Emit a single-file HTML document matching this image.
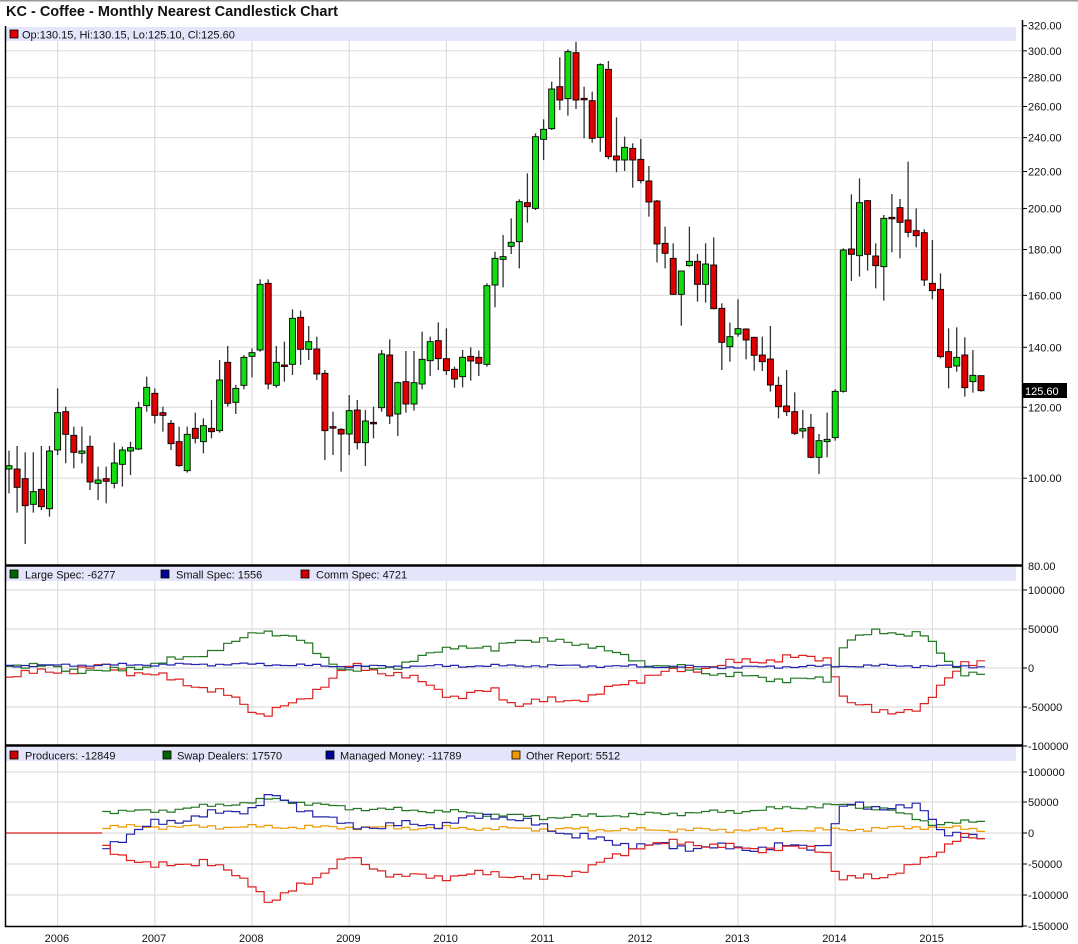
<!DOCTYPE html>
<html><head><meta charset="utf-8"><style>
html,body{margin:0;padding:0;background:#fff;width:1078px;height:944px;overflow:hidden}
svg{display:block}
text{font-family:"Liberation Sans",sans-serif}
</style></head><body>
<svg id="s" width="1078" height="944" xmlns="http://www.w3.org/2000/svg">
<rect x="0" y="0" width="1078" height="944" fill="#fff"/>
<rect x="0" y="0" width="1078" height="1.5" fill="#999"/>
<text x="6" y="16" font-size="14.5" font-weight="bold" fill="#111">KC - Coffee - Monthly Nearest Candlestick Chart</text>
<g id="grid"></g>
<rect x="6" y="27" width="1010" height="14" fill="#e4e4fb"/>
<rect x="6" y="567" width="1010" height="14" fill="#e4e4fb"/>
<rect x="6" y="747" width="1010" height="14" fill="#e4e4fb"/>
<g id="lines"></g>
<g id="candles"></g>
<line x1="5.5" y1="26" x2="5.5" y2="927" stroke="#000" stroke-width="1.5"/>
<line x1="1022.5" y1="20" x2="1022.5" y2="927" stroke="#000" stroke-width="1.5"/>
<line x1="5" y1="926.5" x2="1023" y2="926.5" stroke="#000" stroke-width="1.5"/>
<line x1="5" y1="565.5" x2="1022" y2="565.5" stroke="#000" stroke-width="2.5"/>
<line x1="5" y1="745.5" x2="1022" y2="745.5" stroke="#000" stroke-width="2.5"/>
<g id="axis" font-size="11" fill="#111"></g>
<g font-size="11" fill="#111">
<rect x="10" y="30" width="8" height="8" fill="#e00000" stroke="#000" stroke-width="0.8"/>
<text x="22" y="38.5">Op:130.15, Hi:130.15, Lo:125.10, Cl:125.60</text>
<rect x="10" y="570" width="8" height="8" fill="#006600" stroke="#000" stroke-width="0.8"/>
<text x="25" y="578.5">Large Spec: -6277</text>
<rect x="161" y="570" width="8" height="8" fill="#000099" stroke="#000" stroke-width="0.8"/>
<text x="176" y="578.5">Small Spec: 1556</text>
<rect x="301" y="570" width="8" height="8" fill="#cc0000" stroke="#000" stroke-width="0.8"/>
<text x="316" y="578.5">Comm Spec: 4721</text>
<rect x="10" y="751" width="8" height="8" fill="#cc0000" stroke="#000" stroke-width="0.8"/>
<text x="25" y="759.5">Producers: -12849</text>
<rect x="163" y="751" width="8" height="8" fill="#006600" stroke="#000" stroke-width="0.8"/>
<text x="177" y="759.5">Swap Dealers: 17570</text>
<rect x="326" y="751" width="8" height="8" fill="#000099" stroke="#000" stroke-width="0.8"/>
<text x="340" y="759.5">Managed Money: -11789</text>
<rect x="512" y="751" width="8" height="8" fill="#ee9900" stroke="#000" stroke-width="0.8"/>
<text x="526" y="759.5">Other Report: 5512</text>
<rect x="1023" y="383" width="44" height="15" fill="#000"/>
<text x="1025" y="395" fill="#fff">125.60</text>
</g>
</svg>
<script>
var NS="http://www.w3.org/2000/svg";
function el(p,t,a,txt){var e=document.createElementNS(NS,t);for(var k in a)e.setAttribute(k,a[k]);if(txt!=null)e.textContent=txt;document.getElementById(p).appendChild(e);return e;}
function py(v){return 565-389*Math.log(v/80);}
function X(m){return 9+m*8.1;}
// grid
var prices=[100,120,140,160,180,200,220,240,260,280,300];
prices.forEach(function(p){var y=py(p);el("grid","line",{x1:6,x2:1022,y1:y,y2:y,stroke:"#dedede","stroke-width":1.2});});
for(var yr=0;yr<10;yr++){var x=X(6+12*yr);el("grid","line",{x1:x,x2:x,y1:27,y2:926,stroke:"#dedede","stroke-width":1.2});
 el("axis","text",{x:x-13,y:942},String(2006+yr));}
[590,629,668,707].forEach(function(y){el("grid","line",{x1:6,x2:1022,y1:y,y2:y,stroke:"#dedede","stroke-width":1.2});});
[772,802,833,864,895].forEach(function(y){el("grid","line",{x1:6,x2:1022,y1:y,y2:y,stroke:"#dedede","stroke-width":1.2});});
// axis labels
[320,300,280,260,240,220,200,180,160,140,120,100].forEach(function(p){var y=py(p);el("axis","line",{x1:1022,x2:1027,y1:y,y2:y,stroke:"#000"});el("axis","text",{x:1028,y:y+4},p.toFixed(2));});
el("axis","text",{x:1028,y:570},"80.00");
var l2=[[590,"100000"],[629,"50000"],[668,"0"],[707,"-50000"],[746,"-100000"]];
l2.forEach(function(a){el("axis","line",{x1:1022,x2:1027,y1:a[0],y2:a[0],stroke:"#000"});el("axis","text",{x:1028,y:a[0]+4},a[1]);});
var l3=[[772,"100000"],[802,"50000"],[833,"0"],[864,"-50000"],[895,"-100000"],[926,"-150000"]];
l3.forEach(function(a){el("axis","line",{x1:1022,x2:1027,y1:a[0],y2:a[0],stroke:"#000"});el("axis","text",{x:1028,y:a[0]+4},a[1]);});
// candles: [top,bottom,high,low,color] in zoom coords
var z4=[[617,627,572,700,"g"],[627,682,558,758,"r"],[656,737,577,852,"r"],[695,733,577,758,"g"],[688,740,558,750,"r"],[573,746,558,770,"g"],[458,570,385,585,"g"],[455,523,440,610,"r"],[526,577,500,625,"r"],[573,580,500,610,"g"],[559,666,527,690,"r"],[660,670,620,720,"g"],[656,664,620,730,"r"],[609,670,548,685,"g"],[570,613,560,680,"g"],[563,573,545,645,"g"],[443,567,425,570,"g"],[382,437,350,455,"g"],[400,466,385,490,"r"],[458,466,440,515,"r"],[490,551,480,570,"r"],[545,617,500,620,"r"],[523,632,500,638,"g"],[505,535,458,550,"r"],[497,545,475,580,"g"],[505,515,420,535,"r"],[360,512,300,518,"g"],[307,430,258,440,"r"],[385,427,375,462,"g"],[292,376,285,388,"g"],[278,289,265,352,"g"],[73,270,58,275,"g"],[70,372,58,388,"r"],[307,376,258,383,"g"],[315,318,245,365,"r"],[175,313,148,345,"g"],[172,268,152,315,"r"],[245,268,198,300,"g"],[267,342,230,360,"r"],[340,512,330,600,"r"],[500,502,455,585,"r"],[508,522,505,635,"r"],[452,522,405,585,"g"],[450,548,420,568,"r"],[483,548,450,618,"g"],[487,490,440,535,"r"],[282,443,270,455,"g"],[285,468,238,492,"r"],[368,462,365,528,"g"],[365,432,273,458,"r"],[368,432,273,452,"g"],[298,372,215,388,"g"],[245,302,230,348,"g"],[242,296,187,330,"r"],[296,332,205,345,"r"],[328,357,320,383,"r"],[292,350,270,382,"g"],[289,303,262,362,"r"],[292,310,272,348,"r"]];
var z5=[[767,1003,760,1010,"g"],[685,765,665,832,"g"],[680,688,615,772,"g"],[637,649,565,672,"g"],[515,635,508,715,"g"],[518,530,430,578,"r"],[320,535,310,540,"g"],[298,328,268,390,"g"],[177,296,155,300,"g"],[170,210,82,240,"r"],[65,206,58,257,"g"],[68,210,35,237,"r"],[205,208,170,325,"r"],[212,325,185,338,"r"],[104,322,100,365,"g"],[118,380,93,388,"r"],[378,390,262,427,"r"],[352,390,320,423,"g"],[355,390,340,473,"r"],[388,452,327,460,"r"],[453,516,408,560,"r"],[513,642,510,697,"r"],[640,670,590,715,"r"],[685,793,640,795,"r"],[723,793,722,887,"g"],[694,707,590,710,"g"],[694,763,672,815,"r"],[702,763,640,818,"g"],[705,836,622,838,"r"],[835,937,820,1020,"r"],[920,950,878,995,"g"],[896,912,808,920,"g"],[897,930,895,988,"r"],[922,976,920,1022,"r"],[975,995,920,1023,"r"]];
var z6=[[627,705,528,725,"r"],[706,770,680,805,"r"],[768,785,660,798,"r"],[785,850,727,855,"r"],[836,843,780,865,"g"],[832,922,792,925,"r"],[872,922,852,972,"g"],[868,875,788,922,"g"],[724,863,718,872,"g"],[300,724,295,728,"g"],[297,313,133,393,"r"],[158,317,85,380,"g"],[152,313,150,362,"r"],[318,347,280,415,"r"],[205,350,195,452,"g"],[202,205,132,307,"r"],[173,217,147,325,"r"],[210,247,35,262,"r"],[242,257,175,292,"r"],[248,390,238,408,"r"],[400,422,270,448,"r"],[418,620,370,625,"r"],[605,652,535,715,"r"],[622,648,532,665,"g"],[615,713,562,740,"r"],[676,695,600,728,"g"],[677,722,678,725,"r"]];
var C=[];
z4.forEach(function(c){C.push([260+c[0]/3,260+c[1]/3,260+c[2]/3,260+c[3]/3,c[4]]);});
z5.forEach(function(c){C.push([30+c[0]/3,30+c[1]/3,30+c[2]/3,30+c[3]/3,c[4]]);});
z6.forEach(function(c){C.push([150+c[0]/3,150+c[1]/3,150+c[2]/3,150+c[3]/3,c[4]]);});
C.forEach(function(c,i){var x=X(i);
 el("candles","line",{x1:x,x2:x,y1:c[2],y2:c[3],stroke:"#333","stroke-width":1.3});
 var h=Math.max(c[1]-c[0],1.5);
 el("candles","rect",{x:x-3,y:c[0],width:6,height:h,fill:c[4]=="g"?"#11dd11":"#e00000",stroke:"#000","stroke-width":0.9});});
// lines
function interp(pts,t){if(t<=pts[0][0])return pts[0][1];for(var i=1;i<pts.length;i++){if(t<=pts[i][0]){var a=pts[i-1],b=pts[i];return a[1]+(b[1]-a[1])*(t-a[0])/(b[0]-a[0]);}}return pts[pts.length-1][1];}
function step(pts,m0,m1,zero,scale,col,noise,seed){var d="";for(var m=m0;m<=m1;m++){var t=2005.5+m/12;var v=interp(pts,t)+noise*Math.sin(m*1.7+seed)*Math.cos(m*0.9+seed*2);var y=zero-v*scale;var x0=X(m)-4,x1=X(m)+4;d+=(m==m0?"M":"L")+x0.toFixed(1)+","+y.toFixed(1)+"L"+x1.toFixed(1)+","+y.toFixed(1);}
 el("lines","path",{d:d,fill:"none",stroke:col,"stroke-width":1.2});}
var s2=39/50,s3=31/50;
var lg=[[2005.5,5],[2006,0],[2006.5,-5],[2007,5],[2007.4,15],[2007.8,30],[2008.1,50],[2008.5,35],[2008.8,10],[2009,-5],[2009.5,3],[2009.8,15],[2010.1,30],[2010.5,22],[2010.7,38],[2011,35],[2011.5,30],[2011.8,15],[2012.1,5],[2012.5,-2],[2013,-10],[2013.5,-15],[2013.95,-15],[2014.1,35],[2014.4,45],[2014.9,45],[2015.1,15],[2015.3,-5],[2015.5,-6]];
var cm=lg.map(function(p){return [p[0],-p[1]*1.12-4];});
cm[cm.length-1]=[2015.5,5];cm[cm.length-2]=[2015.3,8];
var sm=[[2005.5,3],[2008,5],[2009,2],[2011,3],[2013,1],[2014.5,3],[2015.5,2]];
step(cm,0,120,668,s2,"#dd2222",6,1);
step(lg,0,120,668,s2,"#227722",5,2);
step(sm,0,120,668,s2,"#2222aa",2,3);
var sw=[[2006.5,35],[2007,35],[2008,50],[2008.2,55],[2009,40],[2010,35],[2011,25],[2012,30],[2013,35],[2014,45],[2014.5,40],[2015,15],[2015.5,18]];
var pr=[[2006.5,-25],[2007,-55],[2007.5,-45],[2008,-80],[2008.2,-115],[2008.5,-85],[2009,-40],[2009.5,-70],[2010,-70],[2010.5,-65],[2011,-75],[2011.5,-55],[2012,-20],[2012.5,-15],[2013,-25],[2013.9,-25],[2014.05,-75],[2014.5,-70],[2015,-40],[2015.3,0],[2015.5,-12]];
var mm=[[2006.5,-20],[2007,15],[2008,40],[2008.2,60],[2009,10],[2010,15],[2010.5,30],[2011,10],[2011.5,-10],[2012,-20],[2013,-25],[2013.9,-20],[2014.1,45],[2014.9,40],[2015.1,5],[2015.5,-12]];
var ot=[[2006.5,10],[2008,10],[2010,8],[2012,5],[2014,5],[2015,10],[2015.5,5]];
el("lines","line",{x1:6,x2:X(12)-4,y1:833,y2:833,stroke:"#dd2222","stroke-width":1.2});
step(ot,12,120,833,s3,"#ee9900",4,4);
step(sw,12,120,833,s3,"#227722",4,5);
step(mm,12,120,833,s3,"#2222aa",8,6);
step(pr,12,120,833,s3,"#dd2222",7,7);
</script>
</body></html>
